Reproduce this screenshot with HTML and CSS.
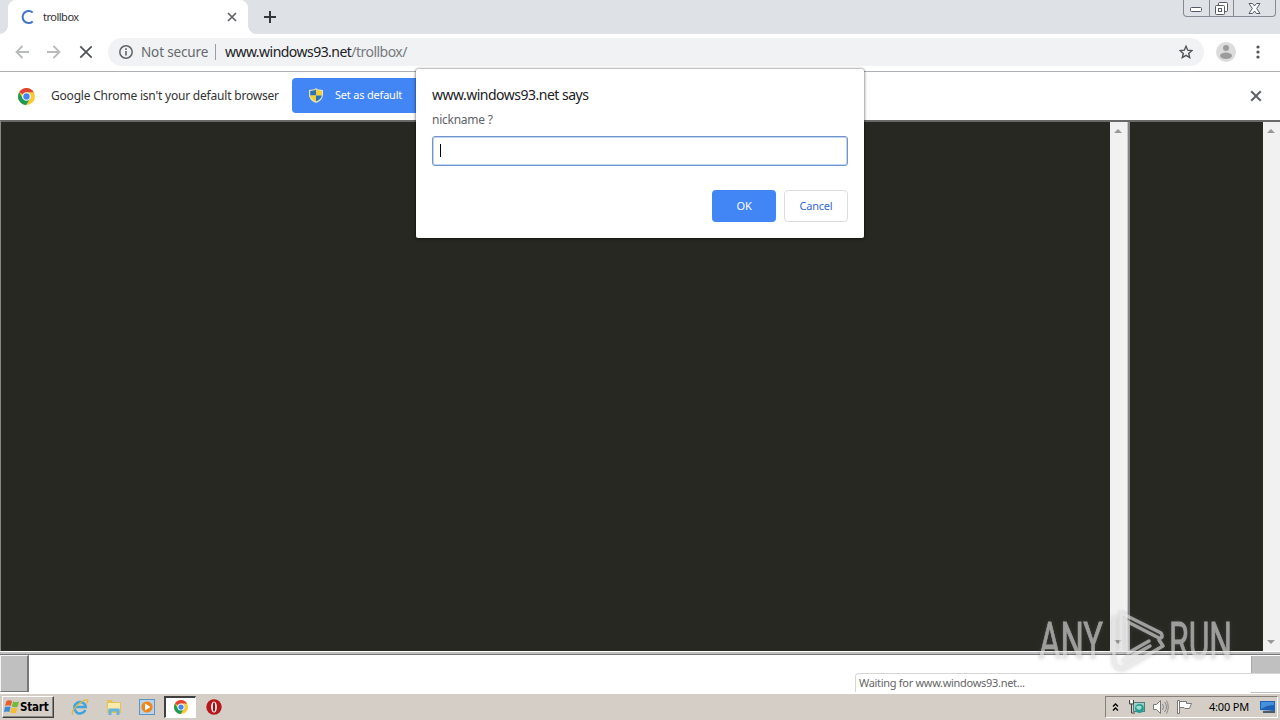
FILE: index.html
```html
<!DOCTYPE html>
<html lang="en">

    <head>
        <meta charset="UTF-8">
        <meta name="viewport" content="width=device-width, initial-scale=1.0">
        <title>trollbox</title>
        <link rel="stylesheet" href="styles.css">
    </head>

    <body>

        <svg class="defs" width="0" height="0">
            <symbol id="chrome" viewBox="0 0 16 16">
                <circle cx="8" cy="8" r="8" fill="#fbc934"/>
                <path d="M8 8 1.1 4A8 8 0 0 1 14.9 4H8z" fill="#df4437"/>
                <path d="M1.1 4A8 8 0 0 0 7.6 16L11.4 10 8 8 4.6 10z" fill="#1e9a58"/>
                <circle cx="8" cy="8" r="4" fill="#fff"/>
                <circle cx="8" cy="8" r="3" fill="#4285f4"/>
            </symbol>
            <symbol id="cross" viewBox="0 0 10 10">
                <path d="M1 1l8 8M9 1l-8 8" fill="none" stroke="currentColor" stroke-width="1.7"/>
            </symbol>
        </svg>

        <header class="tabstrip">
            <div class="tab">
                <svg class="spinner" width="14" height="14" viewBox="0 0 14 14"><path d="M11.7 2.6A6 6 0 1 0 11.7 11.4" fill="none" stroke="#4274c8" stroke-width="2"/></svg>
                <span class="tab-title">trollbox</span>
                <svg class="tab-close" width="10" height="10"><use href="#cross"/></svg>
            </div>
            <svg class="new-tab" width="12" height="12" viewBox="0 0 12 12"><path d="M6 0v12M0 6h12" stroke="#33363b" stroke-width="2"/></svg>
            <div class="window-buttons">
                <span class="min"><svg width="13" height="6" viewBox="0 0 13 6"><rect x=".5" y=".5" width="11" height="4" rx="1" fill="#fff" stroke="#555b66"/></svg></span>
                <span class="max"><svg width="13" height="13" viewBox="0 0 13 13" fill="#fff" stroke="#555b66"><rect x="3.5" y=".5" width="9" height="9" rx="1"/><rect x=".5" y="3.5" width="9" height="9" rx="1"/><rect x="3.5" y="6.5" width="3" height="3"/></svg></span>
                <span class="close"><svg width="13" height="11" viewBox="0 0 13 11"><path d="M1 .5h3.5l2 2.5 2-2.5H12L8.700 5.500 12 10.500H8.500l-2-2.500-2 2.500H1L4.300 5.500z" fill="#fff" stroke="#555b66"/></svg></span>
            </div>
        </header>

        <nav class="toolbar">
            <svg class="back" width="14" height="14" viewBox="0 0 14 14"><path d="M14 7H1.500M7.500 1 1.500 7l6 6" fill="none" stroke="#b9babc" stroke-width="1.800"/></svg>
            <svg class="forward" width="14" height="14" viewBox="0 0 14 14"><path d="M0 7h12.500M6.500 1l6 6-6 6" fill="none" stroke="#b9babc" stroke-width="1.800"/></svg>
            <svg class="stop" width="14" height="14" viewBox="0 0 14 14"><path d="M1.300 1.300l11.400 11.400M12.700 1.300L1.300 12.700" stroke="#505357" stroke-width="1.800"/></svg>
            <div class="omnibox">
                <svg class="info" width="14" height="14" viewBox="0 0 14 14"><circle cx="7" cy="7" r="6.200" fill="none" stroke="#5f6368" stroke-width="1.500"/><path d="M7 6v4.500M7 3.300v1.600" stroke="#5f6368" stroke-width="1.600"/></svg>
                <span class="secure">Not secure</span>
                <span class="url"><span class="host">www.windows93.net</span><span class="path">/trollbox/</span></span>
                <svg class="star" width="14" height="14" viewBox="0 0 14 14"><path d="M7 1.300l1.700 3.900 4.200.4-3.200 2.800 1 4.200L7 10.400l-3.700 2.200 1-4.200L1.100 5.600l4.200-.4z" fill="none" stroke="#505357" stroke-width="1.400"/></svg>
            </div>
            <svg class="avatar" width="20" height="20" viewBox="0 0 20 20"><circle cx="10" cy="10" r="10" fill="#dcdcdc"/><circle cx="10" cy="6" r="3" fill="#9c9c9c"/><ellipse cx="10" cy="13.800" rx="6" ry="3.200" fill="#9c9c9c"/></svg>
            <svg class="menu" width="4" height="14" viewBox="0 0 4 14" fill="#505357"><circle cx="2" cy="2" r="1.600"/><circle cx="2" cy="7" r="1.600"/><circle cx="2" cy="12" r="1.600"/></svg>
        </nav>

        <div class="infobar">
            <svg width="17" height="17"><use href="#chrome"/></svg>
            <span class="message">Google Chrome isn't your default browser</span>
            <button class="set-default">
                <svg width="14" height="15" viewBox="0 0 14 15">
                    <path d="M7 0l1.500 1.200L14 2v5q0 5-7 8Q0 12 0 7V2l5.500-.8z" fill="#e9e3bd"/>
                    <path d="M7 1.500V7.500H1.200V3L5.500 2.300z" fill="#2c72b8"/>
                    <path d="M7 1.500l1.500.8 4.300.7v4.500H7z" fill="#f3cf2f"/>
                    <path d="M1.200 7.500H7v6Q1.500 11 1.200 7.500z" fill="#f3cf2f"/>
                    <path d="M7 7.500h5.800Q12.500 11 7 13.500z" fill="#2c72b8"/>
                </svg>
                <span>Set as default</span>
            </button>
            <svg class="infobar-close" width="12" height="12"><use href="#cross"/></svg>
        </div>

        <main class="page">
            <div class="frames">
                <div class="chat"></div>
                <div class="scrollbar"><i class="up"></i><i class="down"></i></div>
                <div class="divider"></div>
                <div class="users"></div>
                <div class="scrollbar"><i class="up"></i><i class="down"></i></div>
            </div>
            <div class="composer">
                <div class="nick"></div>
                <div class="input"></div>
                <div class="send"></div>
            </div>
            <div class="status">Waiting for www.windows93.net...</div>
            <svg class="watermark" width="249" height="72" viewBox="0 0 249 72">
                <g class="watermark-text">
                    <text x="8" y="50" textLength="64" lengthAdjust="spacingAndGlyphs">ANY</text>
                    <text x="138" y="50" textLength="63" lengthAdjust="spacingAndGlyphs">RUN</text>
                </g>
                <path class="watermark-mark" d="M90 42V5L130 25Q133 30 128 30L97 14V45L118 33M128 32L132 38 92 61Q84 61 83 54V10M92 53L119 38"/>
            </svg>
        </main>

        <footer class="taskbar">
            <div class="start">
                <svg width="16" height="16" viewBox="0 0 16 16"><path d="M2.500 2Q5 .5 8 2L6.800 7Q4 5.600 1 7z" fill="#e75c2c"/><path d="M9 2.500q3 1.200 6 0L13.600 7.700q-3 1.200-5.800-.3z" fill="#75b83c"/><path d="M1 8q3-1.200 5.600 0l-1.300 5Q3 11.800 0 13z" fill="#388bd5"/><path d="M7.500 8.500q2.900 1.400 5.800.2L12 13.800q-3 1.200-5.800-.3z" fill="#f5bd2c"/></svg>
                <span>Start</span>
            </div>
            <div class="launch">
                <svg width="18" height="18" viewBox="0 0 18 18"><path d="M14.300 12A5.700 5.700 0 1 1 14.700 9H5" fill="none" stroke="#43a4dd" stroke-width="2.600"/><path d="M2 16.500C-2 14 11 1 16.500 2q1 .8-.8 3.500" fill="none" stroke="#ddb936" stroke-width="1.200"/></svg>
                <svg width="16" height="16" viewBox="0 0 16 16"><path d="M1 1h5l1 2h8v11H1z" fill="#e3c25a"/><path d="M2 4h12v7H2z" fill="#f8eba9"/><path d="M2.500 16V9.500h11V16h-3v-3.500h-5V16z" fill="#62b3de"/></svg>
                <svg width="16" height="16" viewBox="0 0 16 16"><rect x=".5" y=".5" width="15" height="15" fill="#b8d3ea" stroke="#5b94c5"/><circle cx="8" cy="8" r="5.600" fill="#f08519"/><path d="M6 4.500L11.500 8 6 11.500z" fill="#fff"/></svg>
            </div>
            <div class="task"><svg width="14" height="14"><use href="#chrome"/></svg></div>
            <svg class="opera" width="16" height="16" viewBox="0 0 16 16"><circle cx="8" cy="8" r="7.700" fill="#b5171b"/><ellipse cx="8" cy="8" rx="2.900" ry="5.600" fill="#fff"/><ellipse cx="8" cy="8" rx="1.200" ry="4.800" fill="#9c1115"/></svg>
            <div class="tray">
                <svg class="chevrons" width="7" height="8" viewBox="0 0 7 8"><path d="M1 3.500L3.500 1 6 3.500M1 7.500L3.500 5 6 7.500" fill="none" stroke="#000" stroke-width="1.300"/></svg>
                <svg class="network" width="16" height="16" viewBox="0 0 16 16"><rect x="4.500" y="3.500" width="11" height="9" fill="#9ed0cc" stroke="#557b7b"/><circle cx="10.500" cy="9.500" r="4.500" fill="#2b9c91"/><path d="M7 8q3-3 6 0l-2 3-3-1z" fill="#9be0cf"/><path d="M.5 1v4h4V1M2.500 5v9H6" fill="none" stroke="#444"/><path d="M1.500 1v3h2V1z" fill="#fff"/></svg>
                <svg class="volume" width="17" height="16" viewBox="0 0 17 16"><path d="M1.500 5.500h3l4-4v13l-4-4h-3z" fill="#fff" stroke="#777"/><path d="M10.500 5q2 3 0 6M12.500 3q4 5 0 10M14.500 1.500q3.500 6.500 0 13" fill="none" stroke="#888"/></svg>
                <svg class="flag" width="17" height="16" viewBox="0 0 17 16"><path d="M1.500 1.500h2v13h-2z" fill="#fff" stroke="#777"/><path d="M3.500 2.500h7v2h5l-2 5H9l-1-1H3.500z" fill="#fff" stroke="#777"/></svg>
                <span class="clock">4:00 PM</span>
                <svg class="desktop" width="16" height="14" viewBox="0 0 16 14"><path d="M0 1h15v10L0 10z" fill="#1d60b8"/><path d="M1 2h13v3Q7 5 1 9z" fill="#4490dc"/><path d="M3 12h12" stroke="#21344d" stroke-width="1.500"/></svg>
            </div>
        </footer>

        <div class="dialog">
            <h1>www.windows93.net says</h1>
            <label>nickname ?</label>
            <div class="prompt"><span class="caret"></span></div>
            <div class="actions">
                <button class="ok">OK</button>
                <button class="cancel">Cancel</button>
            </div>
        </div>

    </body>

</html>
```
FILE: styles.css
```css
* {
    box-sizing: border-box;
}

body {
    margin: 0;
    width: 1280px;
    height: 720px;
    overflow: hidden;
    display: flex;
    flex-direction: column;
    position: relative;
    background: #fff;
    font-family: "Noto Sans", "Open Sans", sans-serif;
    font-size: 12px;
    color: #333;
    white-space: nowrap;
}

svg {
    display: block;
    flex: none;
}

button {
    font: inherit;
    padding: 0;
    border: none;
    border-radius: 4px;
}

.defs {
    position: absolute;
}

/* tabs */
.tabstrip {
    height: 34px;
    flex: none;
    display: flex;
    align-items: center;
    padding-left: 8px;
    background: #dee1e6;
}

.tab {
    width: 240px;
    height: 34px;
    display: flex;
    align-items: center;
    padding: 0 11px 0 13px;
    background: #fff;
    border-radius: 8px 8px 0 0;
    position: relative;
}

.tab::before,
.tab::after {
    content: "";
    position: absolute;
    bottom: 0;
    width: 8px;
    height: 8px;
}

.tab::before {
    left: -8px;
    background: radial-gradient(circle at 0 0, #dee1e6 7.5px, #fff 8px);
}

.tab::after {
    right: -8px;
    background: radial-gradient(circle at 100% 0, #dee1e6 7.5px, #fff 8px);
}

.tab-title {
    margin-left: 8px;
    padding-bottom: 2px;
    font-size: 11px;
    letter-spacing: -0.5px;
}

.tab-close {
    margin-left: auto;
    color: #5f6368;
}

.new-tab {
    margin-left: 16px;
}

.window-buttons {
    display: flex;
    align-self: flex-start;
    width: 93px;
    height: 17px;
    margin: 0 4px 0 auto;
    border: 1px solid #858a94;
    border-top: none;
    border-radius: 0 0 4px 4px;
}

.window-buttons span {
    display: flex;
    align-items: center;
    justify-content: center;
    width: 25px;
}

.window-buttons .min {
    align-items: flex-end;
    padding-bottom: 3px;
}

.window-buttons .max {
    border: solid #858a94;
    border-width: 0 1px;
}

.window-buttons .close {
    flex: 1;
}

/* address bar */
.toolbar {
    height: 38px;
    flex: none;
    display: flex;
    align-items: center;
    padding: 0 20px 1px 15px;
    border-bottom: 1px solid #afb0b4;
}

.forward {
    margin-left: 18px;
}

.stop {
    margin-left: 18px;
}

.omnibox {
    width: 1096px;
    height: 28px;
    margin-left: 15px;
    padding: 0 11px;
    display: flex;
    align-items: center;
    background: #f0f2f4;
    border-radius: 14px;
    font-size: 14px;
}

.secure {
    width: 75px;
    margin-left: 8px;
    color: #66696e;
    font-size: 13.5px;
    letter-spacing: -0.15px;
    border-right: 1px solid #999ca1;
    line-height: 16px;
}

.url {
    margin-left: 9px;
    padding-bottom: 2px;
    letter-spacing: -0.53px;
}

.host {
    color: #202124;
}

.path {
    color: #777a7e;
}

.star {
    margin-left: auto;
}

.avatar {
    margin-left: 12px;
}

.menu {
    margin-left: auto;
}

/* default browser bar */
.infobar {
    height: 48px;
    flex: none;
    display: flex;
    align-items: center;
    padding: 0 18px;
}

.message {
    width: 241px;
    margin-left: 16px;
    padding-bottom: 2px;
    letter-spacing: -0.2px;
}

.set-default {
    width: 144px;
    height: 35px;
    margin-bottom: 2px;
    padding-left: 17px;
    display: flex;
    align-items: center;
    gap: 12px;
    background: #4285f4;
    color: #fff;
    font-size: 11px;
    letter-spacing: -0.2px;
}

.set-default span {
    padding-bottom: 1px;
}

.infobar-close {
    margin-left: auto;
    color: #5f6368;
}

/* page content */
.page {
    height: 573px;
    flex: none;
    display: flex;
    flex-direction: column;
    position: relative;
}

.frames {
    height: 531px;
    display: flex;
    border-top: 2px solid #696967;
    border-left: 1px solid #888;
}

.chat {
    width: 1109px;
    background: #272822;
}

.users {
    width: 133px;
    background: #272822;
}

.divider {
    width: 3px;
    background: linear-gradient(to right, #c8c8c8 50%, #858585 50%);
}

.scrollbar {
    width: 17px;
    display: flex;
    flex-direction: column;
    align-items: center;
    justify-content: space-between;
    padding: 7px 1px 7px 0;
    background: #f1f1f1;
}

.scrollbar i {
    width: 8px;
    height: 4px;
    background: #999;
}

.up {
    clip-path: polygon(50% 0, 100% 100%, 0 100%);
}

.down {
    clip-path: polygon(0 0, 100% 0, 50% 100%);
}

.composer {
    flex: 1;
    display: flex;
    border-top: 1px solid #fff;
    background: #fff;
    box-shadow: inset 0 2px #c0c0c0, inset 0 3px #777;
    padding-top: 3px;
}

.nick {
    width: 29px;
    height: 37px;
    background: #c0c0c0;
    border: 1px solid #f4f4f4;
    border-right: 2px solid #777;
    border-bottom-color: #777;
}

.input {
    width: 1220px;
}

.send {
    flex: 1;
    margin: 1px 0 0 2px;
    background: #c0c0c0;
    border-left: 1px solid #aaa;
}

.status {
    position: absolute;
    right: 0;
    bottom: 1px;
    width: 425px;
    height: 19px;
    padding-left: 3px;
    background: #fff;
    border: 1px solid #d6d6d6;
    border-width: 1px 0 0 1px;
    border-top-left-radius: 4px;
    color: #666;
    font-size: 11px;
    letter-spacing: -0.3px;
    line-height: 18px;
}

.watermark {
    position: absolute;
    left: 1031px;
    top: 488px;
    filter: drop-shadow(0 0 2px rgba(100, 100, 100, 0.5));
    opacity: 0.65;
}

.watermark-text {
    font-family: Roboto, sans-serif;
    font-size: 50px;
    fill: #ddd;
    stroke: #ddd;
    stroke-width: 0.8;
}

.watermark-mark {
    fill: none;
    stroke: #e0e0e0;
    stroke-width: 3.5;
    stroke-linejoin: round;
    stroke-linecap: round;
}

/* taskbar */
.taskbar {
    flex: 1;
    display: flex;
    align-items: center;
    padding: 0 2px 1px;
    background: #d5cec7;
    border-top: 1px solid #fff;
}

.start {
    width: 52px;
    height: 22px;
    display: flex;
    align-items: center;
    padding-left: 1px;
    border: 1px solid #fff;
    border-right-color: #404040;
    border-bottom-color: #404040;
    box-shadow: inset -1px -1px #8a8780;
    font: bold 11.5px "DejaVu Sans Condensed", "DejaVu Sans", sans-serif;
    letter-spacing: -0.2px;
    color: #000;
}

.launch {
    display: flex;
    align-items: center;
    gap: 17px;
    margin-left: 17px;
}

.task {
    width: 32px;
    height: 22px;
    margin-left: 9px;
    display: flex;
    align-items: center;
    justify-content: center;
    background: #fff;
    border: 1px solid #404040;
    border-width: 2px 1px 1px 2px;
    border-right-color: #fff;
    border-bottom-color: #fff;
}

.opera {
    margin-left: 10px;
}

.tray {
    width: 173px;
    height: 22px;
    margin-left: auto;
    padding: 0 1px 0 6px;
    display: flex;
    align-items: center;
    border: 1px solid #858079;
    border-right-color: #fff;
    border-bottom-color: #fff;
    color: #000;
}

.network {
    margin-left: 10px;
}

.volume {
    margin-left: 7px;
}

.flag {
    margin-left: 7px;
}

.clock {
    width: 51px;
    margin-left: 16px;
    font-size: 11px;
    letter-spacing: -0.2px;
}

.desktop {
    margin-left: auto;
}

/* nickname prompt */
.dialog {
    position: absolute;
    left: 416px;
    top: 69px;
    width: 448px;
    height: 169px;
    padding: 16px;
    background: #fff;
    border-radius: 2px;
    box-shadow: 0 0 2px rgba(0, 0, 0, 0.6), 0 1px 4px rgba(0, 0, 0, 0.35);
}

.dialog h1 {
    margin: 0;
    font-size: 14px;
    font-weight: normal;
    letter-spacing: -0.5px;
    line-height: 20px;
    color: #202124;
}

.dialog label {
    display: block;
    margin-top: 5px;
    line-height: 20px;
    letter-spacing: -0.25px;
    color: #606368;
}

.prompt {
    height: 30px;
    margin-top: 6px;
    padding: 7px;
    border: 1px solid #6e96cc;
    border-radius: 3px;
    box-shadow: inset 0 0 0 1px #c3d4ed;
}

.caret {
    display: block;
    width: 1px;
    height: 13px;
    background: #000;
}

.actions {
    display: flex;
    justify-content: flex-end;
    gap: 8px;
    margin-top: 24px;
}

.actions button {
    width: 64px;
    height: 32px;
    padding-bottom: 2px;
    font-size: 11px;
    letter-spacing: -0.2px;
}

.ok {
    background: #4285f4;
    color: #fff;
}

.actions .cancel {
    background: #fff;
    border: 1px solid #dadce0;
    color: #3367d6;
}
```
